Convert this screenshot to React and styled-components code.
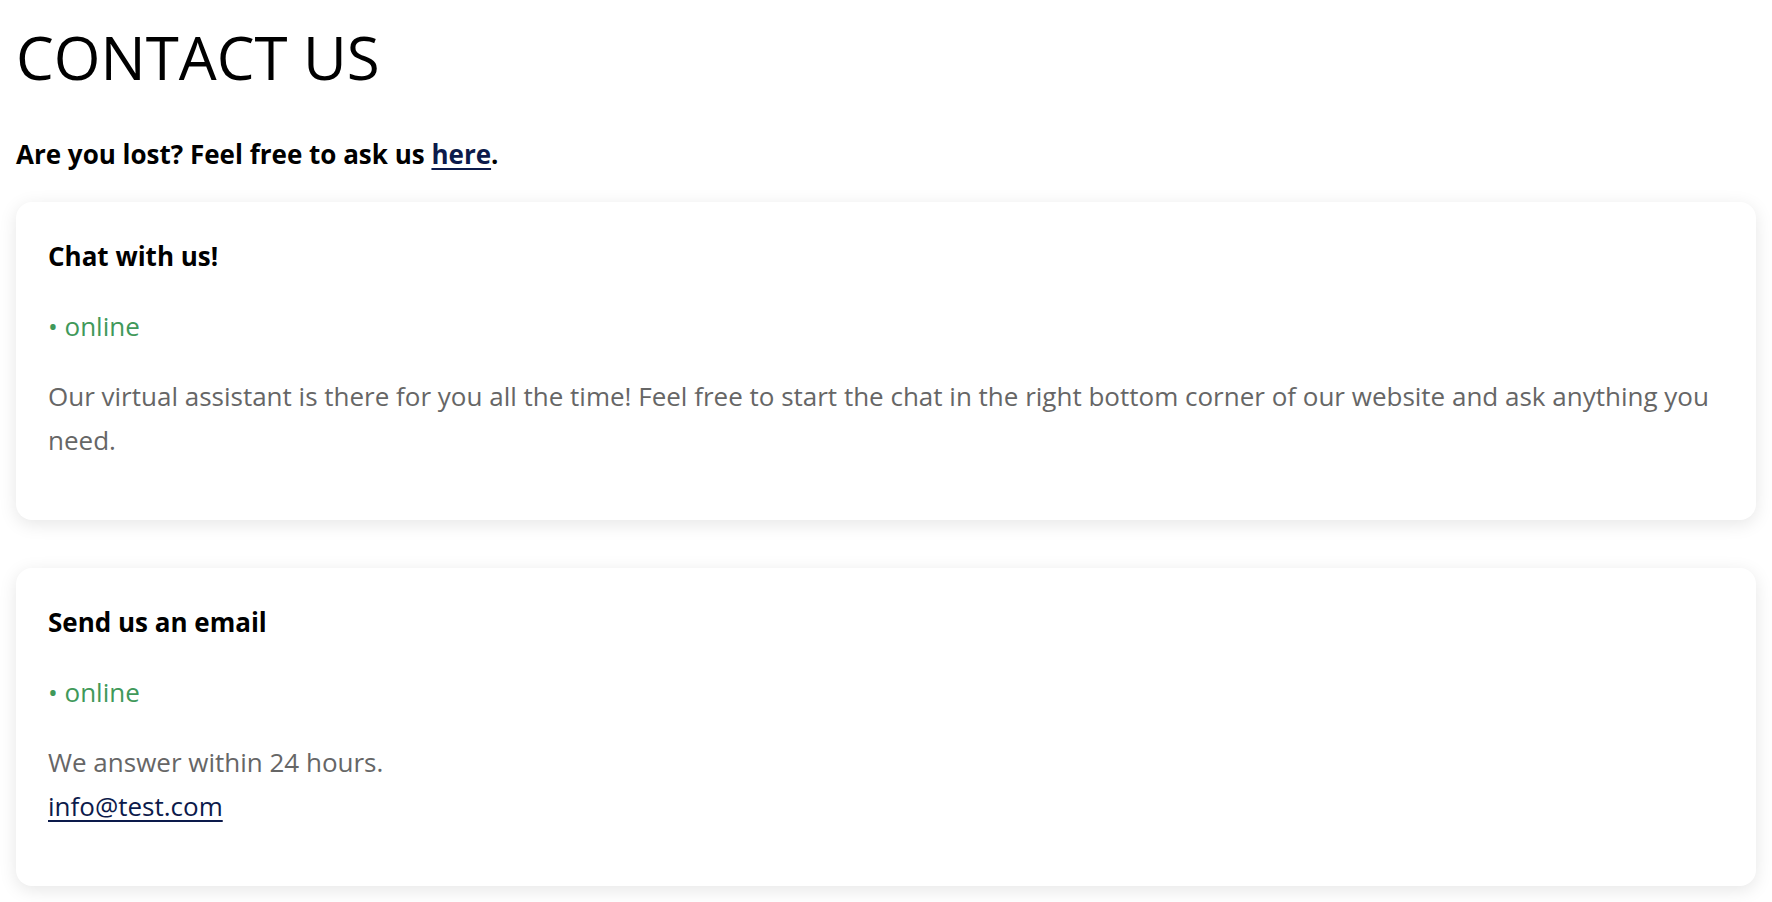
import React from "react";
import styled, { createGlobalStyle } from "styled-components";

const GlobalStyle = createGlobalStyle`
  html, body { margin: 0; padding: 0; background: #ffffff; }
  body { font-family: "Open Sans", "Noto Sans", sans-serif; color: #000; }
`;

const Page = styled.main`
  display: flex;
  flex-direction: column;
  padding: 21px 16px 24px;
`;

const Title = styled.h1`
  margin: 0;
  font-size: 60px;
  font-weight: 400;
  line-height: 73px;
  color: #000;
`;

const Lead = styled.p`
  margin: 38px 0 26px;
  font-size: 26px;
  font-weight: 700;
  line-height: 44px;
`;

const Link = styled.a`
  color: #0c1a4b;
  text-decoration: underline;
  text-underline-offset: 4px;
  text-decoration-thickness: 2px;
`;

const Cards = styled.div`
  display: flex;
  flex-direction: column;
  gap: 48px;
`;

const Card = styled.section`
  background: #fff;
  border-radius: 16px;
  box-shadow: 0 4px 18px rgba(0, 0, 0, 0.1);
  padding: 32px 32px 58px;
  display: flex;
  flex-direction: column;
  gap: 26px;
`;

const CardTitle = styled.h2`
  margin: 0;
  font-size: 26px;
  font-weight: 700;
  line-height: 44px;
  color: #000;
`;

const Status = styled.div`
  font-size: 26px;
  line-height: 44px;
  color: ${(p) => (p.$online ? "#40995a" : "#999")};
`;

const Text = styled.p`
  margin: 0;
  font-size: 26px;
  line-height: 44px;
  color: #666;
`;

const MailLink = styled(Link)`
  text-decoration-thickness: 1.5px;
`;

export default function App() {
  return (
    <>
      <GlobalStyle />
      <Page>
        <Title>CONTACT US</Title>
        <Lead>
          Are you lost? Feel free to ask us <Link href="#">here</Link>.
        </Lead>
        <Cards>
          <Card>
            <CardTitle>Chat with us!</CardTitle>
            <Status $online>• online</Status>
            <Text>
              Our virtual assistant is there for you all the time! Feel free to start the chat in the right bottom corner of our website and ask anything you need.
            </Text>
          </Card>
          <Card>
            <CardTitle>Send us an email</CardTitle>
            <Status $online>• online</Status>
            <Text>
              We answer within 24 hours.
              <br />
              <MailLink href="#">info@test.com</MailLink>
            </Text>
          </Card>
        </Cards>
      </Page>
    </>
  );
}
